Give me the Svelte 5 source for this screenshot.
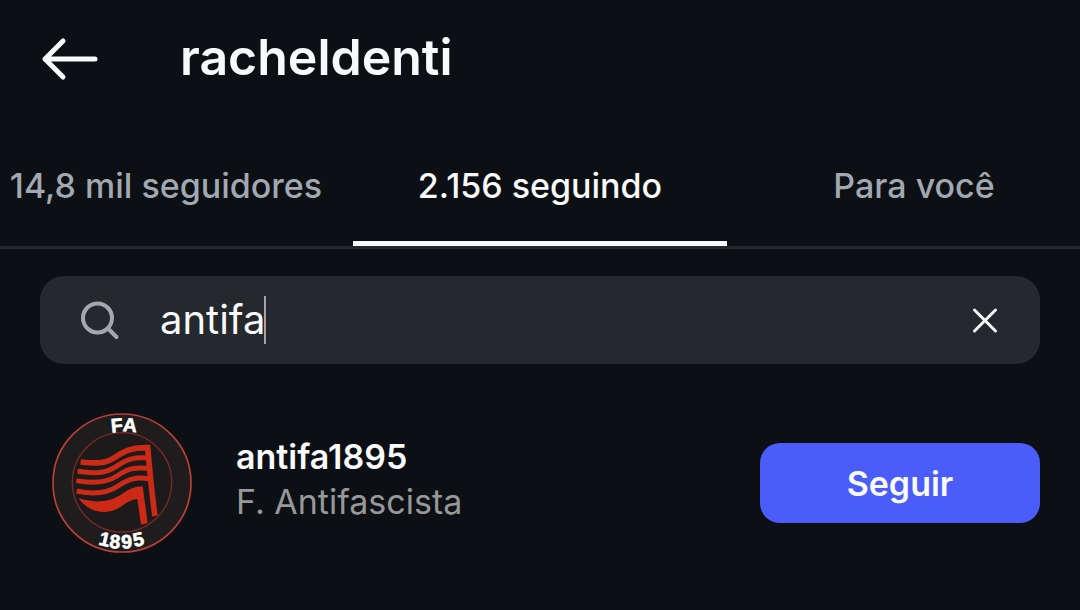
<script lang="ts">
    const tabs = [
        { id: "followers", label: "14,8 mil seguidores" },
        { id: "following", label: "2.156 seguindo" },
        { id: "suggested", label: "Para você" },
    ];
    const users = [{ username: "antifa1895", name: "F. Antifascista" }];

    let active = $state("following");
    let searchValue = $state("antifa");
    let searchElement: HTMLInputElement = $state();
    let followed = $state({});

    let results = $derived(
        users.filter((user) => user.username.includes(searchValue.trim().toLowerCase()))
    );

    function clearSearch() {
        searchValue = "";
        searchElement.focus();
    }
</script>

<header class="topbar">
    <button class="back" aria-label="Voltar">
        <svg viewBox="0 0 60 44" width="60" height="44">
            <path d="M23 4 5 22l18 18M5 22h50" />
        </svg>
    </button>
    <h1>racheldenti</h1>
</header>

<div class="tabs-wrapper">
    <div class="tabs" role="tablist">
        {#each tabs as tab (tab.id)}
            <button
                role="tab"
                aria-selected={active === tab.id}
                class="tab"
                class:active={active === tab.id}
                onclick={() => (active = tab.id)}>{tab.label}</button
            >
        {/each}
    </div>
</div>

<main>
    <div class="search">
        <label for="search">
            <svg viewBox="0 0 40 40" width="40" height="40">
                <circle cx="17.5" cy="18" r="14.5" />
                <path d="M28 28.5l8.5 8.5" />
            </svg>
            <span class="field">
                <input
                    type="text"
                    id="search"
                    aria-label="Pesquisar"
                    autocomplete="off"
                    bind:this={searchElement}
                    bind:value={searchValue}
                />
                <span class="caret"></span>
            </span>
        </label>
        <button class="clear" aria-label="Limpar" onclick={clearSearch}>
            <svg viewBox="0 0 30 30" width="30" height="30">
                <path d="M4.5 5l21 21M25.5 5l-21 21" />
            </svg>
        </button>
    </div>

    <ul class="users">
        {#each results as user (user.username)}
            <li class="user">
                <svg class="avatar" viewBox="36 40 420 420" aria-hidden="true">
                    <circle cx="246" cy="250" r="207" fill="#1f1c1d" stroke="#bd3f35" stroke-width="5" />
                    <circle cx="246" cy="248" r="149" fill="#1c1a1b" stroke="#7c2a24" stroke-width="4" />
                    <g fill="none" stroke="#cc2a16" stroke-width="15">
                        <path
                            stroke-width="17"
                            d="M122 187C164 191 193 194 225 173C255 153 274 144 323 144C329 210 335 280 345 349"
                        />
                        <path d="M113 215C158 222 195 223 229 200C261 178 279 172 326 175" />
                        <path d="M109 243C155 252 195 252 231 229C263 207 282 202 326 206" />
                        <path d="M110 274C156 284 199 283 234 259C267 237 290 231 328 238" />
                    </g>
                    <path
                        fill="#cc2a16"
                        d="M116 296C162 310 207 309 241 286C266 269 284 260 308 260L323 370L303 375L292 298C264 300 249 321 222 332C181 347 135 327 116 296Z"
                    />
                    <g class="badge-text">
                        <text transform="translate(232 97) rotate(-5)">F</text>
                        <text transform="translate(268 96) rotate(5)">A</text>
                        <text transform="translate(190 438) rotate(13)">1</text>
                        <text transform="translate(223 446) rotate(5)">8</text>
                        <text transform="translate(261 446) rotate(-4)">9</text>
                        <text transform="translate(299 439) rotate(-12)">5</text>
                    </g>
                </svg>
                <div class="names">
                    <a href="#{user.username}">{user.username}</a>
                    <span>{user.name}</span>
                </div>
                <button
                    class="follow"
                    onclick={() => (followed[user.username] = !followed[user.username])}
                    >{followed[user.username] ? "Seguindo" : "Seguir"}</button
                >
            </li>
        {/each}
    </ul>
</main>

<style>
    :global(body) {
        margin: 0;
        background-color: #0c1014;
        color: #f8f9fb;
        font-family: Inter, "Noto Sans", sans-serif;
        overflow-x: hidden;
    }
    button {
        padding: 0;
        border: none;
        background: none;
        color: inherit;
        font: inherit;
        cursor: pointer;
    }
    svg {
        display: block;
        flex: none;
    }
    .topbar {
        display: flex;
        align-items: center;
        gap: 80px;
        height: 118px;
        padding: 0 40px;
    }
    .back path {
        fill: none;
        stroke: #f8f9fb;
        stroke-width: 5;
        stroke-linecap: round;
        stroke-linejoin: round;
    }
    h1 {
        margin: 0;
        padding-bottom: 4px;
        font-size: 50px;
        line-height: 60px;
        font-weight: 600;
    }
    .tabs-wrapper {
        overflow: hidden;
        border-bottom: 3px solid #25282d;
    }
    .tabs {
        display: flex;
        margin: 0 -21px;
    }
    .tab {
        flex: 1;
        height: 128px;
        padding-top: 12px;
        border-bottom: 5px solid transparent;
        color: #a2a8b2;
        font-size: 34px;
        font-weight: 500;
        white-space: nowrap;
    }
    .tab.active {
        border-color: #f8f9fb;
        color: #f8f9fb;
    }
    main {
        padding: 27px 40px;
    }
    .search {
        display: flex;
        align-items: center;
        height: 88px;
        padding: 0 40px;
        border-radius: 24px;
        background-color: #25282d;
    }
    .search label {
        display: flex;
        flex: 1;
        align-items: center;
        gap: 40px;
        cursor: text;
    }
    .search label svg {
        fill: none;
        stroke: #a2a8b2;
        stroke-width: 4;
        stroke-linecap: round;
    }
    .field {
        display: flex;
        align-items: center;
    }
    .field input {
        field-sizing: content;
        padding: 0;
        border: none;
        outline: none;
        background: none;
        color: #f8f9fb;
        caret-color: transparent;
        font: inherit;
        font-size: 40px;
        line-height: 48px;
    }
    .caret {
        width: 2px;
        height: 48px;
        margin-left: -2px;
        background-color: #a2a4a8;
    }
    .clear path {
        fill: none;
        stroke: #f8f9fb;
        stroke-width: 3;
        stroke-linecap: round;
    }
    .users {
        margin: 0;
        padding: 49px 0 0 12px;
        list-style: none;
    }
    .user {
        display: flex;
        align-items: center;
        gap: 44px;
    }
    .avatar {
        width: 140px;
        height: 140px;
    }
    .badge-text {
        fill: #fff;
        stroke: #fff;
        stroke-width: 2;
        font-family: "Liberation Sans", sans-serif;
        font-size: 58px;
        font-weight: 700;
        text-anchor: middle;
    }
    .names {
        display: flex;
        flex: 1;
        flex-direction: column;
        padding-bottom: 8px;
        font-size: 34px;
        line-height: 45px;
    }
    .names a {
        color: #f8f9fb;
        font-weight: 600;
        text-decoration: none;
    }
    .names span {
        color: #97989a;
    }
    .follow {
        width: 280px;
        height: 80px;
        border-radius: 20px;
        background-color: #4a5df9;
        font-size: 34px;
        font-weight: 600;
    }
</style>
